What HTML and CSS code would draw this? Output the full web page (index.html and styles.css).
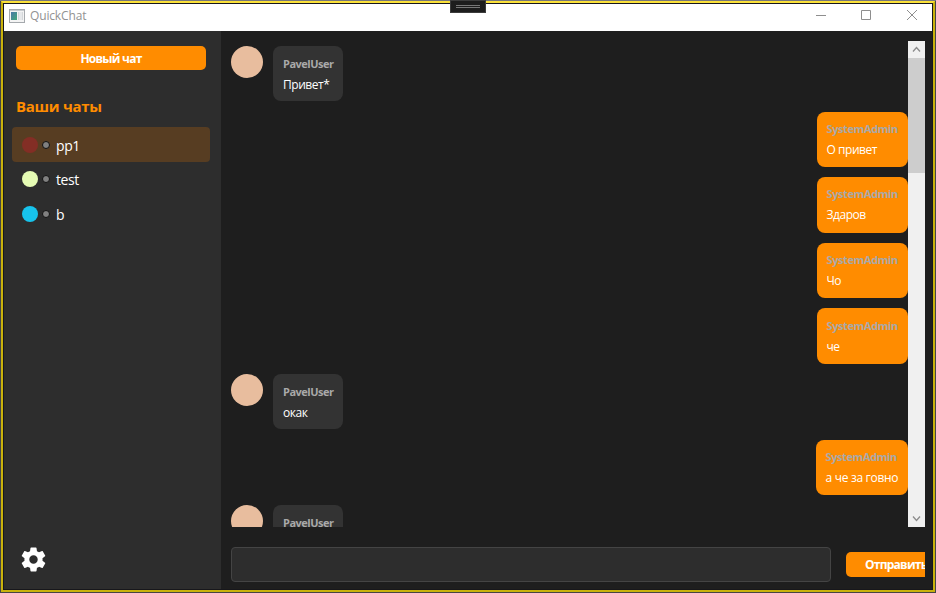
FILE: index.html
```html
<!DOCTYPE html>
<html lang="ru">
<head>
<meta charset="utf-8">
<title>QuickChat</title>
<link rel="stylesheet" href="styles.css">
</head>
<body>
<div class="window">
  <header class="titlebar">
    <svg class="app-icon" width="16" height="14" viewBox="0 0 16 14"><defs><linearGradient id="g" x1="0" y1="0" x2="1" y2="1"><stop offset="0" stop-color="#4a78a8"/><stop offset="1" stop-color="#43a878"/></linearGradient></defs><rect x=".5" y=".5" width="15" height="13" fill="#f4f4f4" stroke="#a5a9ad"/><path d="M1 1.5h14" stroke="#c6cace"/><rect x="2" y="3" width="6" height="8" fill="url(#g)"/><path d="M9.500 3v8M13.500 3v8" stroke="#d4d7da"/><rect x="10" y="3" width="3" height="8" fill="#e6e8ea"/></svg>
    <span class="app-name">QuickChat</span>
    <svg class="controls" width="104" height="12" viewBox="0 0 104 12" fill="none" stroke="#8e8e8e"><path d="M1 6.500h10M46.500 1.500h9v9h-9zM92 1l10 10M102 1L92 11"/></svg>
  </header>
  <div class="body">
    <aside class="sidebar">
      <button class="new-chat">Новый чат</button>
      <h2 class="heading">Ваши чаты</h2>
      <ul class="chats">
        <li class="chat active"><i class="dot red"></i><i class="status"></i><span>pp1</span></li>
        <li class="chat"><i class="dot lime"></i><i class="status"></i><span>test</span></li>
        <li class="chat"><i class="dot cyan"></i><i class="status"></i><span>b</span></li>
      </ul>
      <svg class="gear" width="29" height="29" viewBox="0 0 24 24" fill="#fff"><path d="M19.430 12.980c.04-.32.07-.64.07-.98s-.03-.66-.07-.98l2.110-1.650c.19-.15.24-.42.12-.64l-2-3.460c-.12-.22-.39-.3-.61-.22l-2.490 1c-.52-.4-1.080-.73-1.690-.98l-.38-2.650C14.460 2.180 14.250 2 14 2h-4c-.25 0-.46.18-.49.42l-.38 2.650c-.61.25-1.170.59-1.690.98l-2.490-1c-.23-.09-.49 0-.61.22l-2 3.460c-.13.22-.07.49.12.64l2.110 1.650c-.04.32-.07.65-.07.98s.03.66.07.98l-2.110 1.650c-.19.15-.24.42-.12.64l2 3.460c.12.22.39.3.61.22l2.490-1c.52.4 1.080.73 1.690.98l.38 2.650c.03.24.24.42.49.42h4c.25 0 .46-.18.49-.42l.38-2.650c.61-.25 1.170-.59 1.690-.98l2.490 1c.23.09.49 0 .61-.22l2-3.460c.12-.22.07-.49-.12-.64l-2.110-1.650zM12 15.500c-1.930 0-3.500-1.570-3.500-3.500s1.570-3.500 3.500-3.500 3.500 1.570 3.500 3.500-1.570 3.500-3.500 3.500z"/></svg>
    </aside>
    <main class="main">
      <div class="scroller">
        <div class="messages">
          <div class="row"><i class="avatar"></i><div class="bubble"><b>PavelUser</b><p>Привет*</p></div></div>
          <div class="row own"><div class="bubble"><b>SystemAdmin</b><p>О привет</p></div></div>
          <div class="row own"><div class="bubble"><b>SystemAdmin</b><p>Здаров</p></div></div>
          <div class="row own"><div class="bubble"><b>SystemAdmin</b><p>Чо</p></div></div>
          <div class="row own"><div class="bubble"><b>SystemAdmin</b><p>че</p></div></div>
          <div class="row"><i class="avatar"></i><div class="bubble"><b>PavelUser</b><p>окак</p></div></div>
          <div class="row own"><div class="bubble wide"><b>SystemAdmin</b><p>а че за говно</p></div></div>
          <div class="row"><i class="avatar"></i><div class="bubble"><b>PavelUser</b></div></div>
        </div>
        <div class="scrollbar">
          <svg width="17" height="17" viewBox="0 0 17 17" fill="none" stroke="#8c8c8c" stroke-width="1.300"><path d="M5 10.500l3.500-4 3.500 4"/></svg>
          <div class="thumb"></div>
          <svg class="down" width="17" height="17" viewBox="0 0 17 17" fill="none" stroke="#8c8c8c" stroke-width="1.300"><path d="M5 6.500l3.500 4 3.500-4"/></svg>
        </div>
      </div>
      <div class="composer">
        <div class="input"></div>
        <button class="send">Отправить</button>
      </div>
    </main>
  </div>
</div>
<div class="grip"></div>
</body>
</html>
```

FILE: styles.css
```css
* { box-sizing: border-box; margin: 0; padding: 0; }
body {
  width: 936px; height: 593px; overflow: hidden;
  padding: 1px 1px 1px 1px;
  background: linear-gradient(#77777a 0 1px, #454545 1px);
  font-family: "Open Sans", "Noto Sans", sans-serif;
  color: #fff;
}
.window {
  display: flex; flex-direction: column;
  width: 934px; height: 591px;
  border: 2px solid #c9b20c; border-top-color: #fbe13a;
  padding: 1px; background: #17171c;
}
.titlebar {
  height: 27px; flex: none; display: flex; align-items: center;
  padding: 0 13px 4px 5px; background: #fff;
}
.app-name { margin-left: 5px; font-size: 12px; line-height: 16px; color: #929292; letter-spacing: -.15px; }
.controls { margin-left: auto; position: relative; top: -1px; }
.body { flex: 1; display: flex; min-height: 0; }
.sidebar {
  width: 217px; flex: none; display: flex; flex-direction: column;
  padding: 15px 11px 15px 8px; background: #2d2d2d;
}
button { border: 0; font: bold 12px "Open Sans", sans-serif; color: #fff; background: #ff8c00; border-radius: 5px; }
.new-chat { flex: none; width: 190px; height: 24px; margin-left: 4px; letter-spacing: -.75px; }
.heading { margin: 25px 0 0 4px; height: 32px; font-size: 15px; line-height: 22px; color: #ff8c00; letter-spacing: -.3px; }
.chats { list-style: none; }
.chat { display: flex; align-items: center; height: 35px; padding: 0 0 1px 10px; border-radius: 4px; font-size: 14px; letter-spacing: -.4px; }
.chat span { margin-left: 6px; line-height: 20px; padding-top: 2px; }
.active { background: #573d22; padding-bottom: 0; }
.dot { width: 16px; height: 16px; border-radius: 50%; }
.red { background: #832e25; }
.lime { background: #e5fbb4; }
.cyan { background: #17c3ec; }
.status { width: 8px; height: 8px; margin-left: 4px; border: 1px solid #111; border-radius: 50%; background: #808080; }
.gear { margin: auto 0 0 6.5px; }
.main { flex: 1; min-width: 0; padding: 10px 7px 7px 10px; background: #1e1e1e; }
.scroller { display: flex; height: 486px; overflow: hidden; }
.messages { flex: 1; padding-top: 5px; }
.row { display: flex; height: 55.600px; margin-bottom: 10px; }
.own { justify-content: flex-end; }
.avatar { width: 32px; height: 32px; margin-right: 10px; border-radius: 50%; background: #e8bd9e; }
.bubble { width: 70.300px; height: 55.400px; padding: 10px 0 0 10px; border-radius: 8px; background: #333; white-space: nowrap; }
.bubble b { display: block; height: 20px; font-size: 11px; line-height: 16px; letter-spacing: -.5px; color: #a9a9a9; }
.bubble p { font-size: 12px; line-height: 17px; letter-spacing: -.45px; }
.own .bubble { width: 91.500px; padding: 9.300px 0 0 10px; background: #ff8c00; }
.own .bubble b { letter-spacing: -.4px; }
.own .wide { width: 92.500px; }
.own .wide p { letter-spacing: -.3px; }
.scrollbar { width: 17px; display: flex; flex-direction: column; background: #f0f0f0; }
.thumb { height: 115px; background: #cdcdcd; }
.down { margin-top: auto; }
.composer { display: flex; align-items: center; margin-top: 20px; height: 35px; overflow: hidden; }
.input { width: 600px; height: 35px; flex: none; border: 1px solid #444; border-radius: 4px; background: #2d2d2d; }
.send { flex: none; width: 79px; height: 25px; margin-left: 15px; padding-left: 19px; border-radius: 5px 0 0 5px; text-align: left; letter-spacing: -.75px; }
.grip {
  position: absolute; left: 450px; top: 0; width: 36px; height: 13px;
  border: 1px solid #3c3c3c;
  background: linear-gradient(#777, #777) 5px 4px / 24px 1px no-repeat, linear-gradient(#777, #777) 5px 6px / 24px 1px no-repeat, #1d1d1d;
}
```
